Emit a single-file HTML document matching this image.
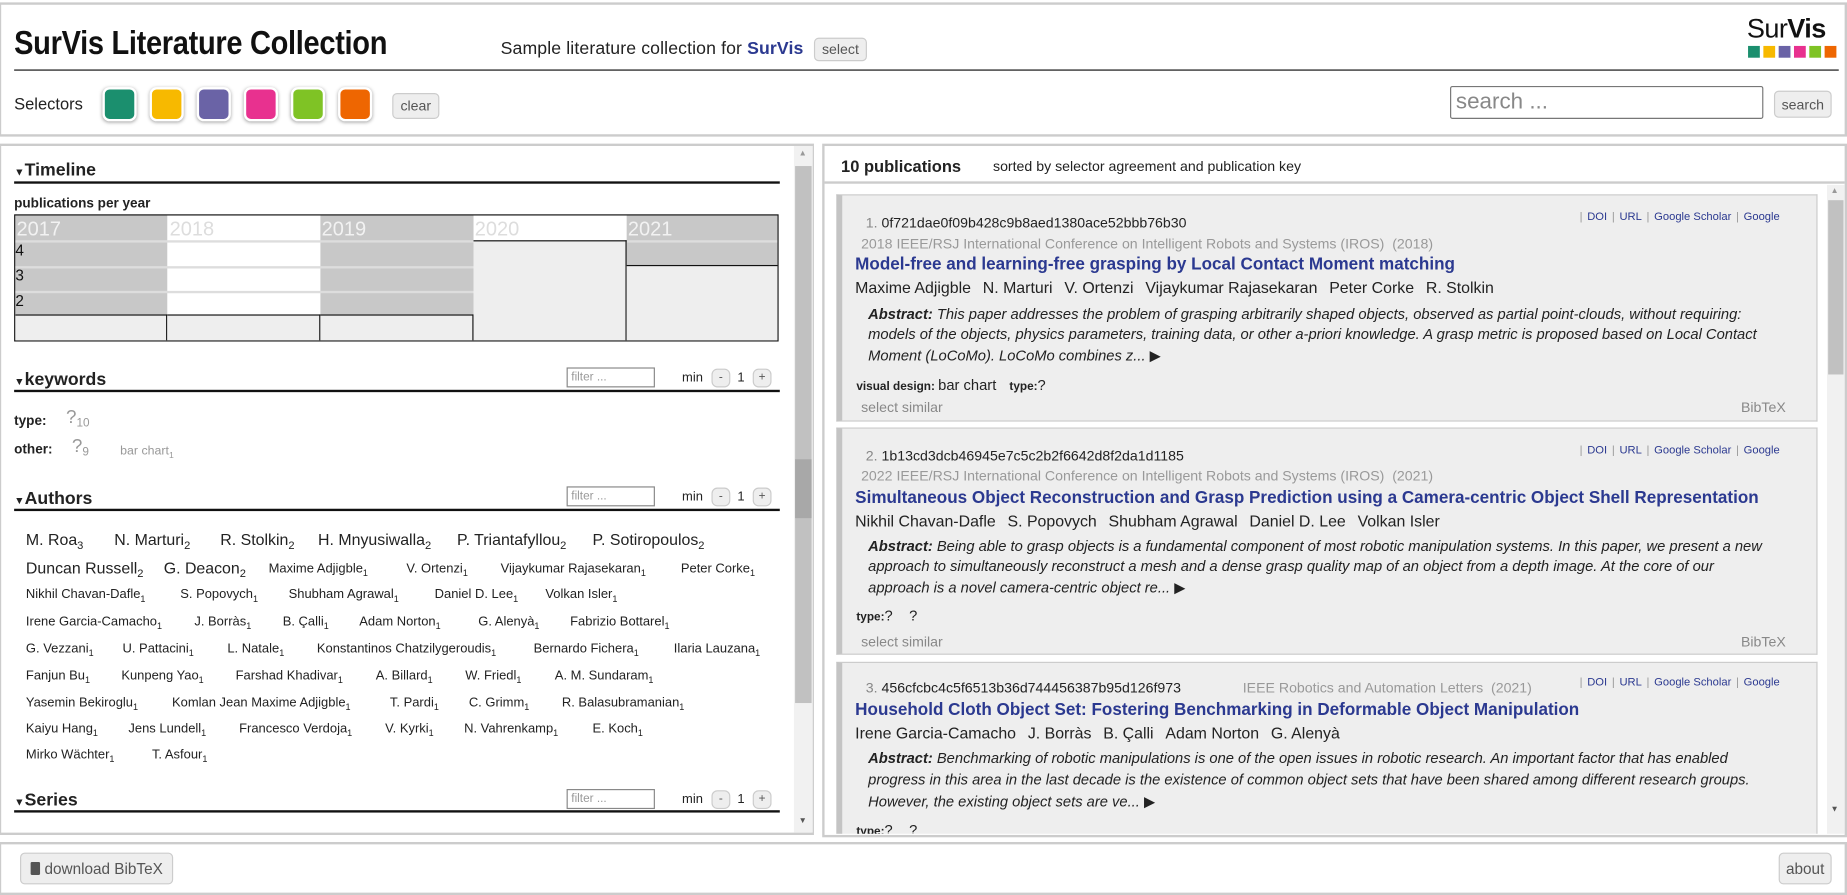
<!DOCTYPE html>
<html><head><meta charset="utf-8">
<style>
*{box-sizing:border-box;margin:0;padding:0}
html,body{width:1847px;height:895px;overflow:hidden;background:#fff}
#w{position:absolute;left:0;top:0;width:1568px;height:760px;transform:scale(1.17793,1.17763);transform-origin:0 0;font-family:"Liberation Sans",sans-serif;color:#222}
.a{position:absolute;white-space:nowrap}
.box{position:absolute;border:2px solid #ccc;background:#fff}
.btn{position:absolute;background:#eee;border:1px solid #ccc;border-radius:4px;color:#555;font-size:12px;text-align:center}
.sel{position:absolute;top:74px;width:29px;height:29px;border-radius:6px;border:2px solid #fff;box-shadow:0 1px 3px rgba(0,0,0,.35)}
.h{font-weight:bold;font-size:15px;line-height:15px}
.line{position:absolute;height:1.5px;background:#111}
.filt{position:absolute;width:75px;height:17px;border:1px solid #888;font-size:10px;color:#999;padding:1px 3px;line-height:13px}
.sm{position:absolute;width:16px;height:16px;border:1px solid #ccc;border-radius:5px;background:#eee;font-size:10px;text-align:center;line-height:14px;color:#555}
.au1{font-size:13.5px}
.au2{font-size:11px}
sub{font-size:.7em;vertical-align:-3px}
.card{position:absolute;left:710px;width:833px;background:#eee;border:1px solid #ccc;border-left:5px solid #c4c4c4}
.key{font-size:12px;color:#222}
.key b{font-weight:normal;color:#888}
.ven{font-size:12px;color:#999}
.ttl{font-size:14.5px;font-weight:bold;color:#2b3990}
.aut{font-size:13.5px}
.aut span{margin-right:10px}
.abs{font-size:12.5px;font-style:italic;color:#222}
.lnk{font-size:9.5px;color:#2b3990}
.lnk i{font-style:normal;color:#999;margin:0 4px}
.ss{font-size:12px;color:#888}
</style></head><body><div id="w">

<!-- header -->
<div class="box" style="left:0;top:2px;width:1568px;height:114px;border-left-width:1px"></div>
<div class="a" style="left:12px;top:21px;font-size:28px;font-weight:bold;color:#111;transform:scaleX(.88);transform-origin:0 0;letter-spacing:-.3px">SurVis Literature Collection</div>
<div class="a" style="left:425px;top:33px;font-size:15px;color:#222;letter-spacing:.1px">Sample literature collection for <b style="color:#2b3990">SurVis</b></div>
<div class="btn" style="left:691px;top:32px;width:45px;height:20px;line-height:18px">select</div>
<div class="a" style="left:1483px;top:11px;font-size:23px;color:#111;letter-spacing:-.5px">Sur<b>Vis</b></div>
<div class="a" style="left:1484px;top:39px;width:76px;height:10px">
 <span style="position:absolute;left:0;width:10px;height:10px;background:#1b8f6e"></span>
 <span style="position:absolute;left:13px;width:10px;height:10px;background:#f7b900"></span>
 <span style="position:absolute;left:26px;width:10px;height:10px;background:#6a63a6"></span>
 <span style="position:absolute;left:39px;width:10px;height:10px;background:#e8318f"></span>
 <span style="position:absolute;left:52px;width:10px;height:10px;background:#7fc325"></span>
 <span style="position:absolute;left:65px;width:10px;height:10px;background:#ee6601"></span>
</div>
<div class="line" style="left:12px;top:58.5px;width:1549px"></div>
<div class="a" style="left:12px;top:80px;font-size:14px">Selectors</div>
<div class="sel" style="left:87px;background:#1b8f6e"></div>
<div class="sel" style="left:127px;background:#f7b900"></div>
<div class="sel" style="left:167px;background:#6a63a6"></div>
<div class="sel" style="left:207px;background:#e8318f"></div>
<div class="sel" style="left:247px;background:#7fc325"></div>
<div class="sel" style="left:287px;background:#ee6601"></div>
<div class="btn" style="left:333px;top:79px;width:40px;height:22px;line-height:21px">clear</div>
<div class="a" style="left:1231px;top:73px;width:266px;height:28px;border:1px solid #777;border-radius:2px;font-size:19px;color:#888;padding:1px 4px;line-height:24px">search ...</div>
<div class="btn" style="left:1506px;top:77px;width:49px;height:23px;line-height:22px">search</div>

<!-- left panel -->
<div class="box" style="left:0;top:122px;width:691px;height:587px;border-left-width:1px"></div>
<div class="a" style="left:674px;top:124px;width:16px;height:583px;background:#f1f1f1"></div>
<div class="a" style="left:675px;top:141px;width:14px;height:456px;background:#c1c1c1"></div>
<div class="a" style="left:675px;top:390px;width:14px;height:50px;background:#a8a8a8"></div>
<div class="a" style="left:678px;top:127px;font-size:7px;color:#999">▲</div>
<div class="a" style="left:678px;top:694px;font-size:7px;color:#555">▼</div>

<div class="a h" style="left:12px;top:137px"><span style="font-size:9px">▼</span>Timeline</div>
<div class="line" style="left:12px;top:154px;width:650px"></div>
<div class="a" style="left:12px;top:167px;font-size:11.5px;font-weight:bold">publications per year</div>
<div class="a" style="left:12px;top:182px;width:649px;height:108px;border:1.5px solid #111;background:#fff;overflow:hidden">
 <div class="a" style="left:0;top:0;width:129px;height:106px;background:#c8c8c8"></div>
 <div class="a" style="left:259px;top:0;width:130px;height:106px;background:#c8c8c8"></div>
 <div class="a" style="left:519px;top:0;width:129px;height:106px;background:#c8c8c8"></div>
 <div class="a" style="left:0;top:21px;width:389px;height:1.5px;background:#ddd"></div>
 <div class="a" style="left:0;top:43px;width:389px;height:1.5px;background:#ddd"></div>
 <div class="a" style="left:0;top:64px;width:389px;height:1.5px;background:#ddd"></div>
 <div class="a" style="left:519px;top:21px;width:129px;height:1.5px;background:#ddd"></div>
 <div class="a" style="left:0;top:84px;width:129px;height:22px;background:#eee;border-top:1.5px solid #111;border-right:1px solid #111"></div>
 <div class="a" style="left:129px;top:84px;width:130px;height:22px;background:#eee;border-top:1.5px solid #111;border-right:1px solid #111"></div>
 <div class="a" style="left:259px;top:84px;width:130px;height:22px;background:#eee;border-top:1.5px solid #111;border-right:1px solid #111"></div>
 <div class="a" style="left:389px;top:21px;width:130px;height:85px;background:#eee;border-top:1.5px solid #111;border-right:1px solid #111"></div>
 <div class="a" style="left:519px;top:42px;width:129px;height:64px;background:#eee;border-top:1.5px solid #111"></div>
 <div class="a" style="left:1px;top:2px;font-size:17px;color:#f2f2f2">2017</div>
 <div class="a" style="left:131px;top:2px;font-size:17px;color:#ddd">2018</div>
 <div class="a" style="left:260px;top:2px;font-size:17px;color:#f2f2f2">2019</div>
 <div class="a" style="left:390px;top:2px;font-size:17px;color:#ddd">2020</div>
 <div class="a" style="left:520px;top:2px;font-size:17px;color:#f2f2f2">2021</div>
 <div class="a" style="left:0;top:22px;font-size:13px;color:#111">4</div>
 <div class="a" style="left:0;top:43px;font-size:13px;color:#111">3</div>
 <div class="a" style="left:0;top:65px;font-size:13px;color:#111">2</div>
</div>

<div class="a h" style="left:12px;top:315px"><span style="font-size:9px">▼</span>keywords</div>
<div class="line" style="left:12px;top:331px;width:650px"></div>
<div class="filt" style="left:481px;top:312px">filter ...</div>
<div class="a" style="left:579px;top:315px;font-size:11px">min</div>
<div class="sm" style="left:604px;top:313px">-</div>
<div class="a" style="left:626px;top:315px;font-size:11px">1</div>
<div class="sm" style="left:639px;top:313px">+</div>
<div class="a" style="left:12px;top:352px;font-size:11.5px;font-weight:bold">type:</div>
<div class="a" style="left:56px;top:346px;font-size:16px;color:#999">?<sub style="font-size:10px">10</sub></div>
<div class="a" style="left:12px;top:376px;font-size:11.5px;font-weight:bold">other:</div>
<div class="a" style="left:61px;top:371px;font-size:16px;color:#999">?<sub style="font-size:10px">9</sub></div>
<div class="a" style="left:102px;top:377px;font-size:10.5px;color:#999">bar chart<sub>1</sub></div>

<div class="a h" style="left:12px;top:416px"><span style="font-size:9px">▼</span>Authors</div>
<div class="line" style="left:12px;top:432px;width:650px"></div>
<div class="filt" style="left:481px;top:413px">filter ...</div>
<div class="a" style="left:579px;top:416px;font-size:11px">min</div>
<div class="sm" style="left:604px;top:414px">-</div>
<div class="a" style="left:626px;top:416px;font-size:11px">1</div>
<div class="sm" style="left:639px;top:414px">+</div>

<div class="au1">
<div class="a" style="left:22px;top:451px">M. Roa<sub>3</sub></div>
<div class="a" style="left:97px;top:451px">N. Marturi<sub>2</sub></div>
<div class="a" style="left:187px;top:451px">R. Stolkin<sub>2</sub></div>
<div class="a" style="left:270px;top:451px">H. Mnyusiwalla<sub>2</sub></div>
<div class="a" style="left:388px;top:451px">P. Triantafyllou<sub>2</sub></div>
<div class="a" style="left:503px;top:451px">P. Sotiropoulos<sub>2</sub></div>
<div class="a" style="left:22px;top:475px">Duncan Russell<sub>2</sub></div>
<div class="a" style="left:139px;top:475px">G. Deacon<sub>2</sub></div>
</div>
<div class="au2">
<div class="a" style="left:228px;top:477px">Maxime Adjigble<sub>1</sub></div>
<div class="a" style="left:345px;top:477px">V. Ortenzi<sub>1</sub></div>
<div class="a" style="left:425px;top:477px">Vijaykumar Rajasekaran<sub>1</sub></div>
<div class="a" style="left:578px;top:477px">Peter Corke<sub>1</sub></div>
<div class="a" style="left:22px;top:499px">Nikhil Chavan-Dafle<sub>1</sub></div>
<div class="a" style="left:153px;top:499px">S. Popovych<sub>1</sub></div>
<div class="a" style="left:245px;top:499px">Shubham Agrawal<sub>1</sub></div>
<div class="a" style="left:369px;top:499px">Daniel D. Lee<sub>1</sub></div>
<div class="a" style="left:463px;top:499px">Volkan Isler<sub>1</sub></div>
<div class="a" style="left:22px;top:522px">Irene Garcia-Camacho<sub>1</sub></div>
<div class="a" style="left:165px;top:522px">J. Borràs<sub>1</sub></div>
<div class="a" style="left:240px;top:522px">B. Çalli<sub>1</sub></div>
<div class="a" style="left:305px;top:522px">Adam Norton<sub>1</sub></div>
<div class="a" style="left:406px;top:522px">G. Alenyà<sub>1</sub></div>
<div class="a" style="left:484px;top:522px">Fabrizio Bottarel<sub>1</sub></div>
<div class="a" style="left:22px;top:545px">G. Vezzani<sub>1</sub></div>
<div class="a" style="left:104px;top:545px">U. Pattacini<sub>1</sub></div>
<div class="a" style="left:193px;top:545px">L. Natale<sub>1</sub></div>
<div class="a" style="left:269px;top:545px">Konstantinos Chatzilygeroudis<sub>1</sub></div>
<div class="a" style="left:453px;top:545px">Bernardo Fichera<sub>1</sub></div>
<div class="a" style="left:572px;top:545px">Ilaria Lauzana<sub>1</sub></div>
<div class="a" style="left:22px;top:568px">Fanjun Bu<sub>1</sub></div>
<div class="a" style="left:103px;top:568px">Kunpeng Yao<sub>1</sub></div>
<div class="a" style="left:200px;top:568px">Farshad Khadivar<sub>1</sub></div>
<div class="a" style="left:319px;top:568px">A. Billard<sub>1</sub></div>
<div class="a" style="left:395px;top:568px">W. Friedl<sub>1</sub></div>
<div class="a" style="left:471px;top:568px">A. M. Sundaram<sub>1</sub></div>
<div class="a" style="left:22px;top:591px">Yasemin Bekiroglu<sub>1</sub></div>
<div class="a" style="left:146px;top:591px">Komlan Jean Maxime Adjigble<sub>1</sub></div>
<div class="a" style="left:331px;top:591px">T. Pardi<sub>1</sub></div>
<div class="a" style="left:398px;top:591px">C. Grimm<sub>1</sub></div>
<div class="a" style="left:477px;top:591px">R. Balasubramanian<sub>1</sub></div>
<div class="a" style="left:22px;top:613px">Kaiyu Hang<sub>1</sub></div>
<div class="a" style="left:109px;top:613px">Jens Lundell<sub>1</sub></div>
<div class="a" style="left:203px;top:613px">Francesco Verdoja<sub>1</sub></div>
<div class="a" style="left:327px;top:613px">V. Kyrki<sub>1</sub></div>
<div class="a" style="left:394px;top:613px">N. Vahrenkamp<sub>1</sub></div>
<div class="a" style="left:503px;top:613px">E. Koch<sub>1</sub></div>
<div class="a" style="left:22px;top:635px">Mirko Wächter<sub>1</sub></div>
<div class="a" style="left:129px;top:635px">T. Asfour<sub>1</sub></div>
</div>

<div class="a h" style="left:12px;top:672px"><span style="font-size:9px">▼</span>Series</div>
<div class="line" style="left:12px;top:688px;width:650px"></div>
<div class="filt" style="left:481px;top:670px">filter ...</div>
<div class="a" style="left:579px;top:673px;font-size:11px">min</div>
<div class="sm" style="left:604px;top:671px">-</div>
<div class="a" style="left:626px;top:673px;font-size:11px">1</div>
<div class="sm" style="left:639px;top:671px">+</div>

<!-- right panel -->
<div class="box" style="left:698px;top:122px;width:870px;height:589px"></div>
<div class="a" style="left:714px;top:133px;font-size:14px;font-weight:bold">10 publications</div>
<div class="a" style="left:843px;top:134px;font-size:12px">sorted by selector agreement and publication key</div>
<div class="a" style="left:700px;top:154px;width:866px;height:1.5px;background:#ccc"></div>
<div class="a" style="left:1551px;top:157px;width:15px;height:551px;background:#f1f1f1"></div>
<div class="a" style="left:1552px;top:170px;width:13px;height:148px;background:#c1c1c1"></div>
<div class="a" style="left:1554px;top:159px;font-size:7px;color:#999">▲</div>
<div class="a" style="left:1554px;top:684px;font-size:7px;color:#555">▼</div>

<div style="position:absolute;left:700px;top:157px;width:850px;height:551px;overflow:hidden">
<div style="position:absolute;left:-700px;top:-157px;width:1568px;height:760px">
<!-- card 1 -->
<div class="card" style="top:165px;height:193px"></div>
<div class="a key" style="left:735px;top:182px"><b>1.</b> 0f721dae0f09b428c9b8aed1380ace52bbb76b30</div>
<div class="a ven" style="left:731px;top:200px">2018 IEEE/RSJ International Conference on Intelligent Robots and Systems (IROS)&nbsp; (2018)</div>
<div class="a lnk" style="left:1337px;top:179px"><i>|</i>DOI<i>|</i>URL<i>|</i>Google Scholar<i>|</i>Google</div>
<div class="a ttl" style="left:726px;top:217px">Model-free and learning-free grasping by Local Contact Moment matching</div>
<div class="a aut" style="left:726px;top:237px"><span>Maxime Adjigble</span><span>N. Marturi</span><span>V. Ortenzi</span><span>Vijaykumar Rajasekaran</span><span>Peter Corke</span><span>R. Stolkin</span></div>
<div class="a abs" style="left:737px;top:260px"><b>Abstract:</b> This paper addresses the problem of grasping arbitrarily shaped objects, observed as partial point-clouds, without requiring:</div>
<div class="a abs" style="left:737px;top:277px">models of the objects, physics parameters, training data, or other a-priori knowledge. A grasp metric is proposed based on Local Contact</div>
<div class="a abs" style="left:737px;top:294px">Moment (LoCoMo). LoCoMo combines z... <span style="font-style:normal">▶</span></div>
<div class="a" style="left:727px;top:320px;font-size:10px;font-weight:bold">visual design: <span style="font-weight:normal;font-size:12.5px">bar chart</span> &nbsp;&nbsp; type:<span style="font-weight:normal;font-size:12.5px">?</span></div>
<div class="a ss" style="left:731px;top:339px">select similar</div>
<div class="a ss" style="left:1478px;top:339px">BibTeX</div>

<!-- card 2 -->
<div class="card" style="top:363px;height:193px"></div>
<div class="a key" style="left:735px;top:380px"><b>2.</b> 1b13cd3dcb46945e7c5c2b2f6642d8f2da1d1185</div>
<div class="a ven" style="left:731px;top:397px">2022 IEEE/RSJ International Conference on Intelligent Robots and Systems (IROS)&nbsp; (2021)</div>
<div class="a lnk" style="left:1337px;top:377px"><i>|</i>DOI<i>|</i>URL<i>|</i>Google Scholar<i>|</i>Google</div>
<div class="a ttl" style="left:726px;top:415px">Simultaneous Object Reconstruction and Grasp Prediction using a Camera-centric Object Shell Representation</div>
<div class="a aut" style="left:726px;top:435px"><span>Nikhil Chavan-Dafle</span><span>S. Popovych</span><span>Shubham Agrawal</span><span>Daniel D. Lee</span><span>Volkan Isler</span></div>
<div class="a abs" style="left:737px;top:457px"><b>Abstract:</b> Being able to grasp objects is a fundamental component of most robotic manipulation systems. In this paper, we present a new</div>
<div class="a abs" style="left:737px;top:474px">approach to simultaneously reconstruct a mesh and a dense grasp quality map of an object from a depth image. At the core of our</div>
<div class="a abs" style="left:737px;top:491px">approach is a novel camera-centric object re... <span style="font-style:normal">▶</span></div>
<div class="a" style="left:727px;top:516px;font-size:10px;font-weight:bold">type:<span style="font-weight:normal;font-size:12.5px">? &nbsp;&nbsp; ?</span></div>
<div class="a ss" style="left:731px;top:538px">select similar</div>
<div class="a ss" style="left:1478px;top:538px">BibTeX</div>

<!-- card 3 -->
<div class="card" style="top:562px;height:193px"></div>
<div class="a key" style="left:735px;top:577px"><b>3.</b> 456cfcbc4c5f6513b36d744456387b95d126f973</div>
<div class="a ven" style="left:1055px;top:577px">IEEE Robotics and Automation Letters&nbsp; (2021)</div>
<div class="a lnk" style="left:1337px;top:574px"><i>|</i>DOI<i>|</i>URL<i>|</i>Google Scholar<i>|</i>Google</div>
<div class="a ttl" style="left:726px;top:595px">Household Cloth Object Set: Fostering Benchmarking in Deformable Object Manipulation</div>
<div class="a aut" style="left:726px;top:615px"><span>Irene Garcia-Camacho</span><span>J. Borràs</span><span>B. Çalli</span><span>Adam Norton</span><span>G. Alenyà</span></div>
<div class="a abs" style="left:737px;top:637px"><b>Abstract:</b> Benchmarking of robotic manipulations is one of the open issues in robotic research. An important factor that has enabled</div>
<div class="a abs" style="left:737px;top:655px">progress in this area in the last decade is the existence of common object sets that have been shared among different research groups.</div>
<div class="a abs" style="left:737px;top:673px">However, the existing object sets are ve... <span style="font-style:normal">▶</span></div>
<div class="a" style="left:727px;top:698px;font-size:10px;font-weight:bold">type:<span style="font-weight:normal;font-size:12.5px">? &nbsp;&nbsp; ?</span></div>
</div></div>

<!-- footer -->
<div class="box" style="left:0;top:715px;width:1568px;height:45px;border-left-width:1px"></div>
<div class="btn" style="left:17px;top:724px;width:130px;height:27px;line-height:26px;font-size:13px;color:#555"><span style="display:inline-block;width:8px;height:11px;background:#555;border-radius:1px;vertical-align:-1px;margin-right:4px"></span>download BibTeX</div>
<div class="btn" style="left:1510px;top:724px;width:45px;height:27px;line-height:26px;font-size:13px">about</div>
</div></body></html>
